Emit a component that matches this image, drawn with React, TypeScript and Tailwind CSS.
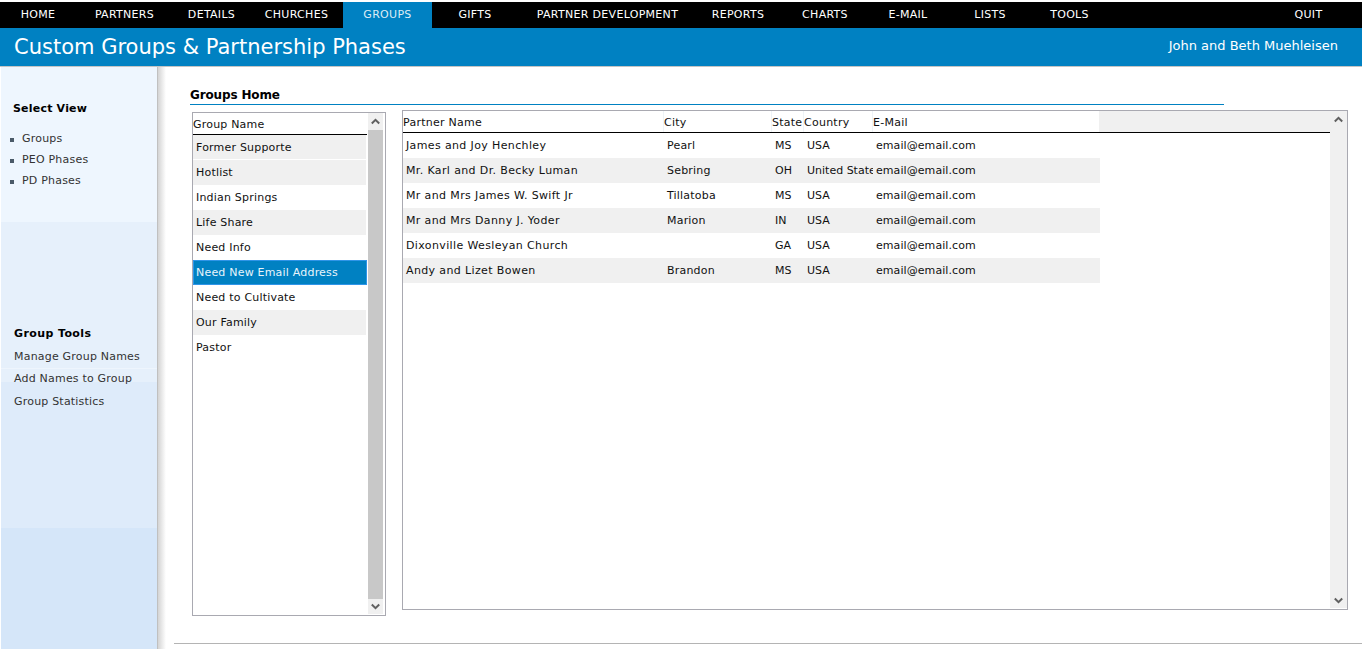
const navItems = [
  { label: "HOME", width: "w-[76px]" },
  { label: "PARTNERS", width: "w-[97px]" },
  { label: "DETAILS", width: "w-[77px]" },
  { label: "CHURCHES", width: "w-[93px]" },
  { label: "GROUPS", width: "w-[89px]", active: true },
  { label: "GIFTS", width: "w-[86px]" },
  { label: "PARTNER DEVELOPMENT", width: "w-[179px]" },
  { label: "REPORTS", width: "w-[82px]" },
  { label: "CHARTS", width: "w-[92px]" },
  { label: "E-MAIL", width: "w-[74px]" },
  { label: "LISTS", width: "w-[90px]" },
  { label: "TOOLS", width: "w-[69px]" },
];

const groups = [
  { name: "Former Supporte", tone: "first" },
  { name: "Hotlist", tone: "grey" },
  { name: "Indian Springs", tone: "white" },
  { name: "Life Share", tone: "grey" },
  { name: "Need Info", tone: "white" },
  { name: "Need New Email Address", tone: "selected" },
  { name: "Need to Cultivate", tone: "white" },
  { name: "Our Family", tone: "grey" },
  { name: "Pastor", tone: "white" },
];

const partners = [
  ["James and Joy Henchley", "Pearl", "MS", "USA"],
  ["Mr. Karl and Dr. Becky Luman", "Sebring", "OH", "United States"],
  ["Mr and Mrs James W. Swift Jr", "Tillatoba", "MS", "USA"],
  ["Mr and Mrs Danny J. Yoder", "Marion", "IN", "USA"],
  ["Dixonville Wesleyan Church", "", "GA", "USA"],
  ["Andy and Lizet Bowen", "Brandon", "MS", "USA"],
];

function Chevron({ down }: { down?: boolean }) {
  return (
    <svg width="9" height="7" viewBox="0 0 9 7" className={down ? "rotate-180" : ""}>
      <path d="M0.8 5.5 L4.5 1.8 L8.2 5.5" fill="none" stroke="#606060" strokeWidth="2" />
    </svg>
  );
}

function Scrollbar({ thumb }: { thumb?: boolean }) {
  return (
    <div className="flex h-full flex-col bg-[#f0f0f0]">
      <div className="flex h-[17px] shrink-0 items-center justify-center pb-px">
        <Chevron />
      </div>
      <div className={`flex-1 ${thumb ? "bg-[#c8c8c8]" : ""}`} />
      <div className="flex h-[15px] shrink-0 items-center justify-center">
        <Chevron down />
      </div>
    </div>
  );
}

export default function App() {
  return (
    <div className="flex h-[649px] flex-col overflow-hidden bg-white pt-[2px] font-['DejaVu_Sans','Liberation_Sans',sans-serif] text-[11px] text-[#111]">
      <nav className="flex h-[26px] shrink-0 bg-black tracking-[0.3px] text-white">
        {navItems.map((item) => (
          <div
            key={item.label}
            className={`flex items-center justify-center ${item.width} ${item.active ? "bg-[#0081c2] text-[#dcecf5]" : ""}`}
          >
            {item.label}
          </div>
        ))}
        <div className="ml-auto mr-[15px] flex w-[77px] items-center justify-center">QUIT</div>
      </nav>

      <header className="flex h-[39px] shrink-0 items-center justify-between border-b border-[#c4c4c4] bg-[#0081c2] pl-[14px] pr-[24px] text-white">
        <h1 className="text-[21px] leading-none">Custom Groups &amp; Partnership Phases</h1>
        <span className="pb-[2px] text-[13px]">John and Beth Muehleisen</span>
      </header>

      <div className="flex min-h-0 flex-1">
        <aside className="w-[158px] shrink-0 border-r border-r-[#c0c0c0] border-l border-l-white bg-[linear-gradient(#eef6fe_0,#eef6fe_155px,#e6f0fb_155px,#e6f0fb_315px,#deebfa_315px,#deebfa_461px,#d5e6f9_461px)] tracking-[0.2px]">
          <h2 className="ml-[12px] mt-[35px] font-bold leading-[14px] text-black">Select View</h2>
          <ul className="mt-[13px]">
            {["Groups", "PEO Phases", "PD Phases"].map((label) => (
              <li key={label} className="flex h-[21px] items-center text-[#333]">
                <span className="ml-[9px] h-[4px] w-[4px] bg-[#4a5a68]" />
                <span className="ml-[8px]">{label}</span>
              </li>
            ))}
          </ul>
          <h2 className="ml-[13px] mt-[135px] font-bold leading-[14px] tracking-[0.4px] text-black">Group Tools</h2>
          <ul className="mt-[5px] text-[#333]">
            <li className="flex h-[22px] items-center pl-[13px]">Manage Group Names</li>
            <li className="flex h-[22px] items-center border-t border-[#eef5fd] pl-[13px]">Add Names to Group</li>
            <li className="flex h-[24px] items-center pl-[13px]">Group Statistics</li>
          </ul>
        </aside>
        <div className="w-[8px] shrink-0 bg-gradient-to-r from-[#d4d4d4] to-white" />

        <main className="flex min-w-0 flex-1 flex-col pl-[8px]">
          <div className="flex-1 pl-[15px] pr-[14px]">
            <div className="ml-[1px] mt-[21px] w-[1034px] border-b border-[#0081c2] pb-[2px] text-[12px] font-bold leading-[14px] tracking-[-0.15px] text-black">
              Groups Home
            </div>
            <div className="mt-[5px] flex items-start gap-[16px] pl-[3px]">
              <section className="mt-[2px] flex h-[504px] w-[194px] shrink-0 border border-[#a9a9b1] pb-px pr-[2px]">
                <div className="w-[174px] shrink-0 tracking-[0.2px]">
                  <div className="flex h-[22px] items-center border-b border-black pt-[3px]">Group Name</div>
                  {groups.map((group) => (
                    <div
                      key={group.name}
                      className={`flex h-[25px] items-center ${
                        group.tone === "selected"
                          ? "border border-[#2f95e8] bg-[#0081c2] pl-[2px] pt-[2px] text-[#e8f4fb]"
                          : group.tone === "first"
                            ? "mr-px border-b border-white bg-[#f0f0f0] pl-[3px] pt-[2px]"
                            : group.tone === "grey"
                              ? "mr-px bg-[#f0f0f0] pl-[3px] pt-px"
                              : "pl-[3px] pt-px"
                      }`}
                    >
                      {group.name}
                    </div>
                  ))}
                </div>
                <div className="ml-px w-[15px] shrink-0">
                  <Scrollbar thumb />
                </div>
              </section>

              <section className="flex h-[500px] w-[946px] shrink-0 border border-[#a9a9b1] pb-px">
                <div className="flex min-w-0 flex-1 flex-col">
                  <div className="flex h-[22px] shrink-0 border-b border-black tracking-[0.25px]">
                    <div className="flex w-[696px] bg-white">
                      <span className="flex w-[261px] shrink-0 items-center border-r border-[#eef3f7] pt-[3px]">Partner Name</span>
                      <span className="flex w-[108px] shrink-0 items-center border-r border-[#eef3f7] pt-[3px]">City</span>
                      <span className="flex w-[32px] shrink-0 items-center border-r border-[#eef3f7] pt-[3px]">State</span>
                      <span className="flex w-[69px] shrink-0 items-center border-r border-[#eef3f7] pt-[3px]">Country</span>
                      <span className="flex w-[226px] shrink-0 items-center pt-[3px]">E-Mail</span>
                    </div>
                    <div className="flex-1 bg-[#f0f0f0]" />
                  </div>
                  {partners.map((row, i) => (
                    <div key={row[0]} className={`flex h-[25px] w-[697px] items-center pt-[2px] ${i % 2 === 1 ? "bg-[#f0f0f0]" : ""}`}>
                      <span className="w-[261px] shrink-0 pl-[3px] tracking-[0.37px]">{row[0]}</span>
                      <span className="w-[108px] shrink-0 pl-[3px] tracking-[0.2px]">{row[1]}</span>
                      <span className="w-[32px] shrink-0 pl-[3px]">{row[2]}</span>
                      <span className="w-[69px] shrink-0 overflow-hidden whitespace-nowrap pl-[3px]">{row[3]}</span>
                      <span className="w-[227px] shrink-0 pl-[3px] tracking-[0.07px]">email@email.com</span>
                    </div>
                  ))}
                </div>
                <div className="w-[17px] shrink-0">
                  <Scrollbar />
                </div>
              </section>
            </div>
          </div>
          <div className="mb-[5px] h-px bg-[#b4b4b4]" />
        </main>
      </div>
    </div>
  );
}
